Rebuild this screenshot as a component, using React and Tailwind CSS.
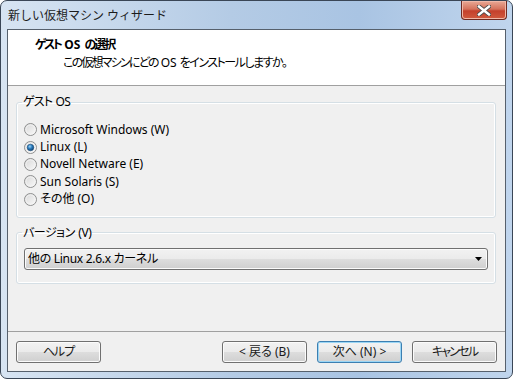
import React from 'react';

const btnBase =
  "w-[85px] h-[22px] rounded-[3px] border flex items-center justify-center text-[12px] text-[#1a1a1a] bg-[linear-gradient(#f2f2f2,#ebebeb_48%,#dddddd_52%,#cfcfcf)]";

function Radio({ checked }) {
  return (
    <svg width="13" height="13" viewBox="0 0 13 13" className="shrink-0">
      <defs>
        <linearGradient id="rfill" x1="0" y1="0" x2="1" y2="1">
          <stop offset="0" stopColor="#d6d6d6" />
          <stop offset="1" stopColor="#fbfbfb" />
        </linearGradient>
        <radialGradient id="rdot" cx="0.4" cy="0.35" r="0.7">
          <stop offset="0" stopColor="#9fd4f4" />
          <stop offset="0.45" stopColor="#2b7ec0" />
          <stop offset="1" stopColor="#0d3a66" />
        </radialGradient>
      </defs>
      <circle cx="6.5" cy="6.5" r="6" fill="url(#rfill)" stroke="#8e8f8f" />
      <circle cx="6.5" cy="6.5" r="4.6" fill="none" stroke="#f4f4f4" strokeWidth="0.8" />
      {checked && <circle cx="6.5" cy="6.5" r="3.3" fill="url(#rdot)" stroke="#1d4f7c" strokeWidth="0.6" />}
    </svg>
  );
}

function Btn({ children, def }) {
  return (
    <div
      className={
        def
          ? `${btnBase} border-[#3c7fb1] shadow-[inset_0_0_0_1px_#9bd6f5]`
          : `${btnBase} border-[#707070] shadow-[inset_0_0_0_1px_#fbfbfb]`
      }
    >
      {children}
    </div>
  );
}

export default function App() {
  const options = [
    ['Microsoft Windows (W)', false],
    ['Linux (L)', true],
    ['Novell Netware (E)', false],
    ['Sun Solaris (S)', false],
    ['その他 (O)', false],
  ];

  return (
    <div className="w-[513px] h-[379px] font-['Noto_Sans','Noto_Sans_CJK_JP',sans-serif] text-[12px] text-black">
      <div className="w-full h-full flex flex-col rounded-[7px] border border-[#3a4656] bg-[linear-gradient(to_right,#d7e4f2,#b4cbe5_45%,#a9c4e3_70%,#c0d5ed)] px-[6px] pb-[6px]">
        {/* Title bar */}
        <div className="h-[28px] flex items-start justify-between">
          <div className="self-center pl-[1px] pt-[1px] text-[12px] text-[#1b1b1b]">新しい仮想マシン ウィザード</div>
          <div className="w-[46px] h-[19px] mr-[-1px] rounded-b-[4px] border border-t-0 border-[#6e2a22] bg-[linear-gradient(#e9a996,#d5725c_45%,#c4402c_55%,#d05a3e)] flex items-center justify-center shadow-[inset_0_0_0_1px_#f0b8a8]">
            <svg width="14" height="11" viewBox="0 0 14 11">
              <path d="M2 1.5 L12 9.5 M12 1.5 L2 9.5" stroke="#4a4a4a" strokeWidth="4.2" strokeLinecap="square" />
              <path d="M2 1.5 L12 9.5 M12 1.5 L2 9.5" stroke="#ffffff" strokeWidth="2.4" strokeLinecap="square" />
            </svg>
          </div>
        </div>

        {/* Client area */}
        <div className="flex-1 flex flex-col border border-[#56606c] bg-[#f0f0f0] [font-feature-settings:'palt']">
          {/* Header */}
          <div className="h-[56px] bg-white border-b border-[#a0a0a0] pl-[27px] pt-[6px]">
            <div className="flex font-bold leading-[18px] whitespace-nowrap">
              <span className="tracking-[-2.5px]">ゲスト</span>
              <span className="ml-[4px] mr-[4px]">OS</span>
              <span className="tracking-[-2px]">の選択</span>
            </div>
            <div className="flex pl-[28px] leading-[18px] whitespace-nowrap">
              <span className="tracking-[-1.8px]">この仮想マシンにどの</span>
              <span className="ml-[3px] mr-[3px]">OS</span>
              <span className="tracking-[-1.5px]">をインストールしますか。</span>
            </div>
          </div>

          {/* Guest OS group */}
          <fieldset className="mt-[8px] ml-[8px] mr-[9px] border border-[#d5dfe5] rounded-[3px] px-[7px] pb-[9px] shadow-[inset_0_0_0_1px_#ffffff]">
            <legend className="ml-[-2px] px-[1px] leading-[16px] tracking-[-0.8px] [word-spacing:1px]">ゲスト OS</legend>
            <div className="pt-[11px] flex flex-col">
              {options.map(([label, checked]) => (
                <div key={label} className="h-[17.4px] flex items-center gap-[3px]">
                  <Radio checked={checked} />
                  <span className="leading-[16px]">{label}</span>
                </div>
              ))}
            </div>
          </fieldset>

          {/* Version group */}
          <fieldset className="mt-[7px] ml-[8px] mr-[9px] border border-[#d5dfe5] rounded-[3px] px-[7px] pb-[13px] shadow-[inset_0_0_0_1px_#ffffff]">
            <legend className="ml-[-2px] px-[1px] leading-[16px] tracking-[-0.5px] [word-spacing:1px]">バージョン (V)</legend>
            <div className="mt-[7px] h-[22px] rounded-[3px] border border-[#707070] bg-[linear-gradient(#f2f2f2,#ebebeb_48%,#dddddd_52%,#cfcfcf)] shadow-[inset_0_0_0_1px_#fbfbfb] flex items-center justify-between pl-[3px] pr-[5px]">
              <span className="tracking-[-0.3px]">他の Linux 2.6.x カーネル</span>
              <svg width="7" height="4" viewBox="0 0 7 4">
                <path d="M0 0 H7 L3.5 4 Z" fill="#000" />
              </svg>
            </div>
          </fieldset>

          {/* Footer */}
          <div className="mt-auto border-t border-[#a0a0a0] pt-[9px] pb-[8px] px-[8px] flex items-center">
            <Btn><span className="tracking-[-1px]">ヘルプ</span></Btn>
            <div className="ml-auto flex gap-[10px]">
              <Btn>&lt; 戻る (B)</Btn>
              <Btn def>次へ (N) &gt;</Btn>
              <Btn><span className="tracking-[-1.8px]">キャンセル</span></Btn>
            </div>
          </div>
        </div>
      </div>
    </div>
  );
}
